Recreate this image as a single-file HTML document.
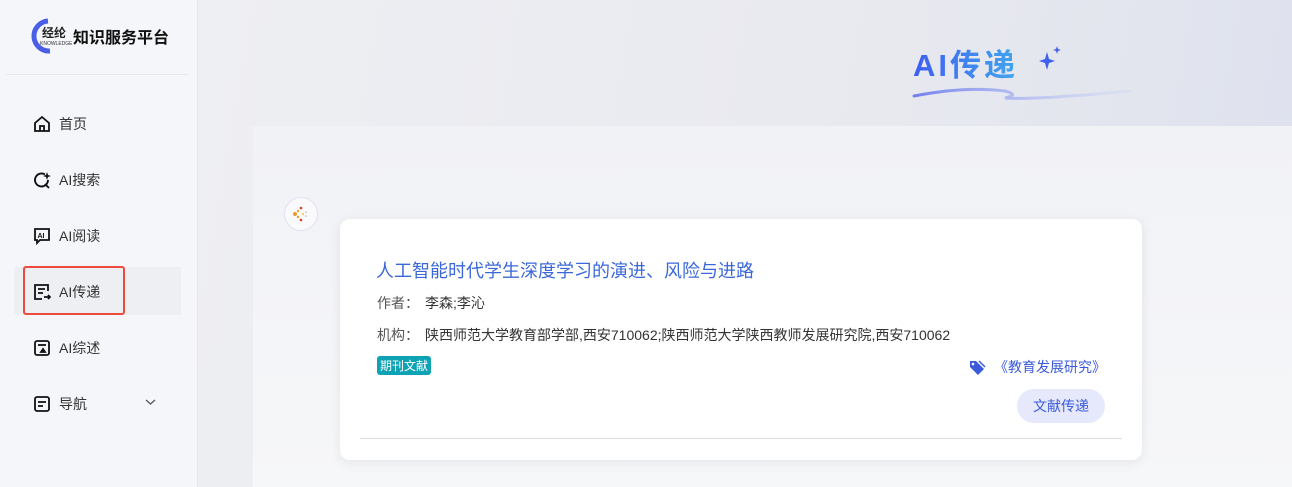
<!DOCTYPE html>
<html><head><meta charset="utf-8"><style>
*{margin:0;padding:0;box-sizing:border-box}
body{width:1292px;height:487px;overflow:hidden;font-family:"Liberation Sans","Noto Sans CJK SC",sans-serif;background:#eef0f5;position:relative}
.side{position:absolute;left:0;top:0;width:198px;height:487px;background:#f5f6fa;border-right:1px solid #e6e8ee}
.logo{position:absolute;left:28px;top:18px;display:flex;align-items:center}
.logo .t{font-size:16px;font-weight:bold;color:#111;margin-left:-1px}
.hr{position:absolute;left:6px;top:74px;width:182px;height:1px;background:#e6e8ee}
.item{position:absolute;left:33px;display:flex;align-items:center;font-size:14px;color:#333}
.item svg{margin-right:8px}
.main{position:absolute;left:198px;top:0;right:0;height:487px;background:linear-gradient(100deg,#eeeff3 0%,#e8e9ef 60%,#dde1ee 100%)}
.inner{position:absolute;left:253px;top:126px;right:0;bottom:0;background:linear-gradient(180deg,#f1f2f6,#f6f7f9)}
.card{position:absolute;left:340px;top:219px;width:802px;height:241px;background:#fff;border-radius:10px;box-shadow:0 2px 12px rgba(0,0,0,.08)}
.title{position:absolute;left:36px;top:38px;font-size:18px;color:#3b68d9}
.row{position:absolute;left:37px;font-size:14px;color:#555}
.row span{color:#333;margin-left:6px}
.tag{position:absolute;left:37px;top:137px;background:#0ea3b4;color:#fff;font-size:12px;padding:1px 3px;border-radius:3px}
.jr{position:absolute;right:36px;top:138px;font-size:14px;color:#3b5bdb;display:flex;align-items:center}
.btn{position:absolute;right:37px;top:170px;width:88px;height:34px;border-radius:17px;background:#e6e8fb;color:#3b5bdb;font-size:14px;text-align:center;line-height:34px}
.line{position:absolute;left:20px;right:20px;top:219px;height:1px;background:#ddd}
</style></head><body>
<div class="side">
 <div class="logo">
  <svg width="46" height="36" viewBox="0 0 46 36"><path d="M20 3 A15 15 0 1 0 22 33" fill="none" stroke="#4b5ee8" stroke-width="5"/><text x="14" y="19" font-size="12" font-weight="bold" fill="#222" font-family="Noto Sans CJK SC">经纶</text><text x="12" y="27" font-size="5" fill="#333">KNOWLEDGE</text></svg>
  <span class="t">知识服务平台</span>
 </div>
 <div class="hr"></div>
 <div class="item" style="top:114px"><svg width="18" height="18" viewBox="0 0 18 18" fill="none" stroke="#111" stroke-width="1.8"><path d="M2 8 L9 2 L16 8 V16 H2 Z M7 16 V11 H11 V16"/></svg>首页</div>
 <div class="item" style="top:170px"><svg width="18" height="18" viewBox="0 0 18 18" fill="none" stroke="#111" stroke-width="1.9"><path d="M12 3.5 A6.5 6.5 0 1 0 15 9"/><path d="M12 13 L16 17"/><path d="M14 1 L15 4 L18 5 L15 6 L14 9 L13 6 L10 5 L13 4Z" fill="#111" stroke="none"/></svg>AI搜索</div>
 <div class="item" style="top:226px"><svg width="18" height="18" viewBox="0 0 18 18" fill="none" stroke="#111" stroke-width="1.8"><path d="M2 2 H16 V13 H7 L4 16 V13 H2 Z"/><text x="4.5" y="11" font-size="7" font-weight="bold" fill="#111" stroke="none">AI</text></svg>AI阅读</div>
 <div style="position:absolute;left:14px;top:267px;width:167px;height:48px;background:#eeeff2"></div>
 <div style="position:absolute;left:23px;top:266px;width:102px;height:49px;border:2px solid #ee4b3f;border-radius:3px"></div>
 <div class="item" style="top:282px"><svg width="18" height="18" viewBox="0 0 18 18" fill="none" stroke="#111" stroke-width="1.8"><path d="M15 8 V2 H2 V16 H9"/><path d="M5 6 H12 M5 10 H10 M11 14 H17 M15 12 L17 14 L15 16"/></svg>AI传递</div>
 <div class="item" style="top:338px"><svg width="18" height="18" viewBox="0 0 18 18" fill="none" stroke="#111" stroke-width="1.8"><rect x="2" y="2" width="14" height="14" rx="2"/><path d="M5 6 H13"/><path d="M10 10 L12 13 L8 13Z" fill="#111"/></svg>AI综述</div>
 <div class="item" style="top:394px"><svg width="18" height="18" viewBox="0 0 18 18" fill="none" stroke="#111" stroke-width="1.8"><rect x="2" y="2" width="14" height="14" rx="2"/><path d="M5 7 H13 M5 11 H10"/></svg>导航</div>
 <svg style="position:absolute;left:145px;top:398px" width="11" height="8" viewBox="0 0 11 8" fill="none" stroke="#555" stroke-width="1.3"><path d="M1 2 L5.5 6 L10 2"/></svg>
</div>
<div class="main"></div>
<div class="inner"></div>
<svg style="position:absolute;left:905px;top:40px" width="230" height="65" viewBox="0 0 230 65">
 <defs><linearGradient id="g" x1="0" x2="1"><stop offset="0" stop-color="#3e5ef0"/><stop offset="1" stop-color="#41a6f0"/></linearGradient><linearGradient id="g2" x1="0" x2="1"><stop offset="0" stop-color="#7480ee"/><stop offset="1" stop-color="#c9d6f6" stop-opacity=".3"/></linearGradient></defs>
 <text x="8" y="36" font-size="31" font-weight="bold" fill="url(#g)" font-family="Liberation Sans,Noto Sans CJK SC" letter-spacing="3">AI传递</text>
 <path d="M142 12 L144 19 L150 21 L144 23 L142 30 L140 23 L134 21 L140 19Z" fill="#3e60ef"/>
 <path d="M152 6 L153 9 L156 10 L153 11 L152 14 L151 11 L148 10 L151 9Z" fill="#3e60ef"/>
 <path d="M9 56 Q60 46 100 51 Q115 55 100 58 Q130 60 225 51" fill="none" stroke="url(#g2)" stroke-width="3" stroke-linecap="round"/>
</svg>
<div style="position:absolute;left:284px;top:197px;width:34px;height:34px;border-radius:50%;border:1px solid #dfe0f3;background:#fafafc"></div>
<svg style="position:absolute;left:291px;top:204px" width="20" height="20" viewBox="0 0 20 20"><g fill="#f39a2a"><circle cx="4" cy="10" r="2"/><circle cx="10" cy="4" r="1.3" fill="#e23a2a"/><circle cx="10" cy="16" r="1.3" fill="#e23a2a"/><circle cx="7" cy="7" r="1.2"/><circle cx="7" cy="13" r="1.2"/><circle cx="12" cy="10" r="1.2" fill="#f4cf6a"/><circle cx="15" cy="8" r=".8" fill="#bbb"/><circle cx="15" cy="12" r=".8" fill="#bbb"/></g></svg>
<div class="card">
 <div class="title">人工智能时代学生深度学习的演进、风险与进路</div>
 <div class="row" style="top:74px">作者：<span>李森;李沁</span></div>
 <div class="row" style="top:106px">机构：<span>陕西师范大学教育部学部,西安710062;陕西师范大学陕西教师发展研究院,西安710062</span></div>
 <div class="tag">期刊文献</div>
 <div class="jr"><svg width="17" height="17" viewBox="0 0 17 17" style="margin-right:8px"><path d="M1 2 V8 L9 16 L15 10 L7 2Z" fill="#3b5bdb"/><circle cx="4" cy="5" r="1.3" fill="#fff"/><path d="M10 2 L16 8" stroke="#3b5bdb" stroke-width="1.5"/></svg>《教育发展研究》</div>
 <div class="btn">文献传递</div>
 <div class="line"></div>
</div>
</body></html>
